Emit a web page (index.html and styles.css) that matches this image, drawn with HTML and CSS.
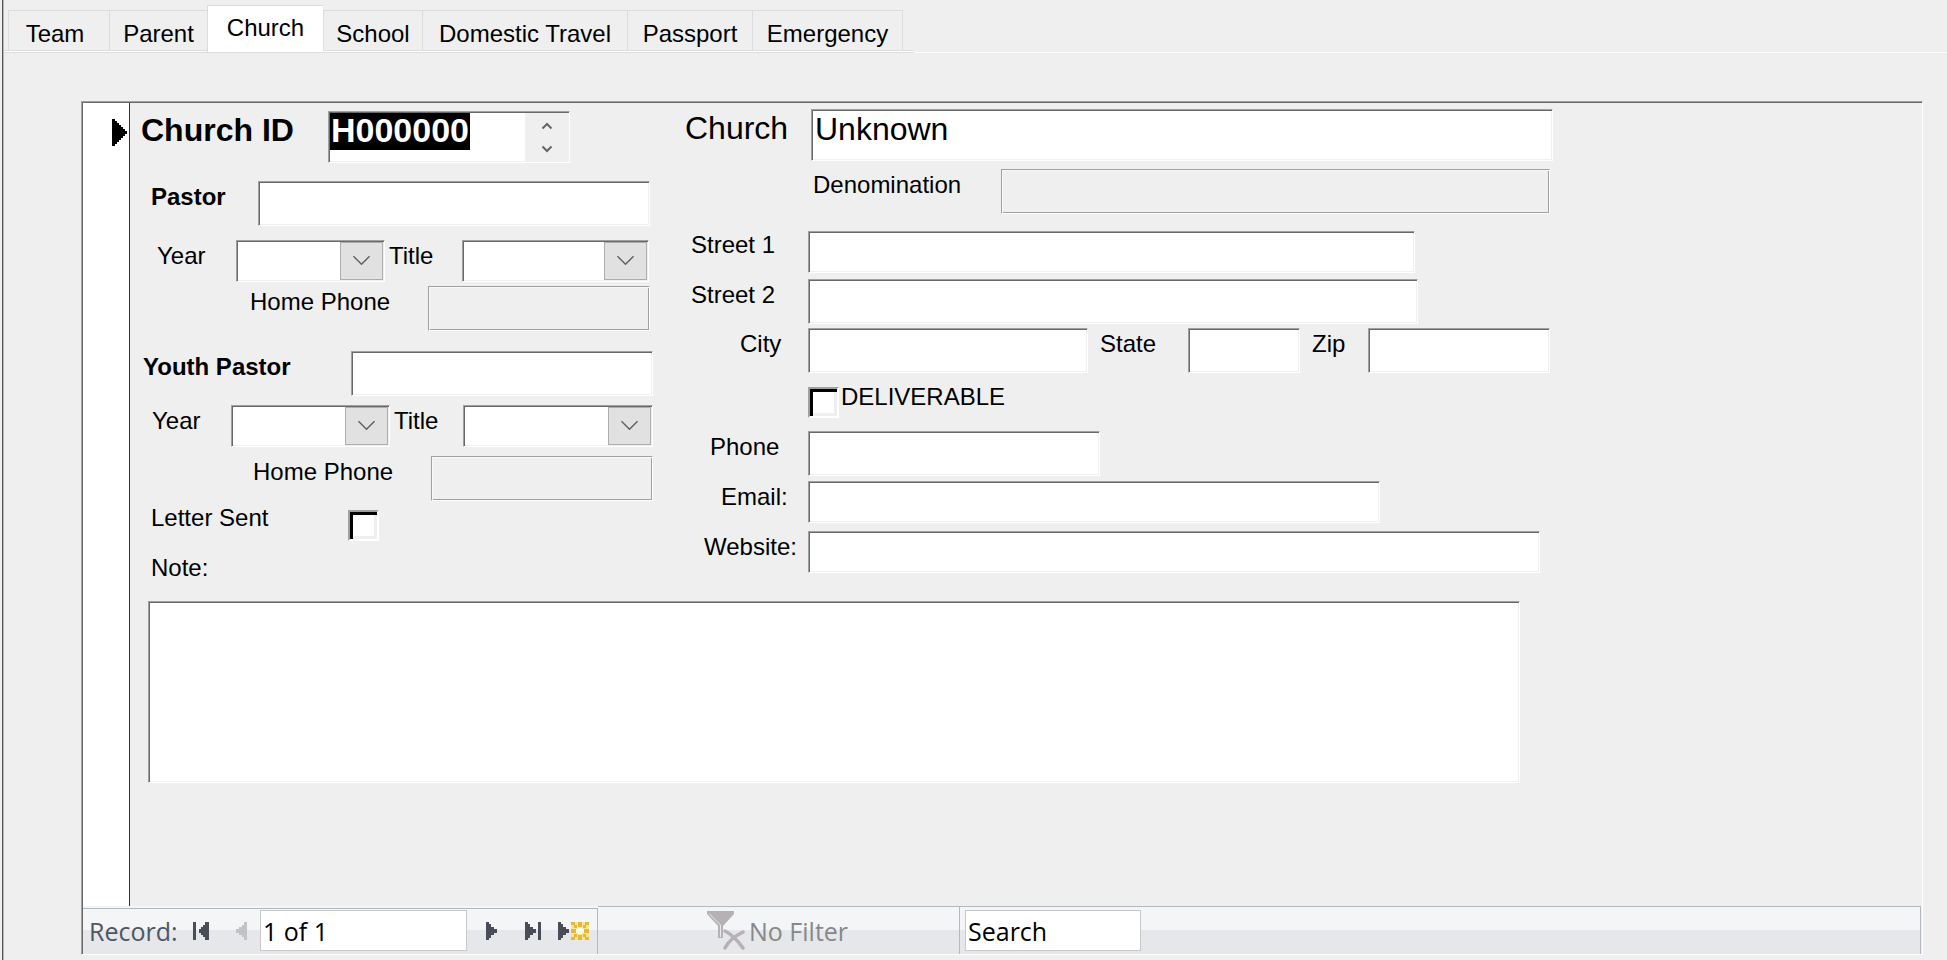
FILE: index.html
```html
<!DOCTYPE html>
<html lang="en">
<head>
<meta charset="utf-8">
<title>Church</title>
<link rel="stylesheet" href="styles.css">
</head>
<body>
<main class="window">
  <div class="tab-strip">
    <nav class="tabs" role="tablist">
      <button class="tab tab-first" role="tab">Team</button>
      <button class="tab" role="tab">Parent</button>
      <button class="tab tab-active" role="tab" aria-selected="true">Church</button>
      <button class="tab" role="tab">School</button>
      <button class="tab" role="tab">Domestic Travel</button>
      <button class="tab" role="tab">Passport</button>
      <button class="tab" role="tab">Emergency</button>
    </nav>
  </div>

  <section class="subform">
    <div class="record">
      <div class="selector">
        <svg class="marker" width="15" height="27" viewBox="0 0 15 27"><path d="M0 0h3v2h2v2h2v2h2v2h2v2h2v2h2v3h-2v2h-2v2H9v2H7v2H5v2H3v2H0z"/></svg>
      </div>
      <form class="detail">
        <div class="columns">
          <div class="people">
            <div class="row row-id">
              <label class="label label-large label-strong" for="church-id">Church ID</label>
              <div class="field spinner">
                <input class="id-value" id="church-id" value="H000000">
                <div class="spin-buttons">
                  <button class="spin" type="button" aria-label="Previous"><svg width="12" height="9" viewBox="0 0 12 9"><path d="M1.500 7.500 6 3l4.500 4.500"/></svg></button>
                  <button class="spin" type="button" aria-label="Next"><svg width="12" height="9" viewBox="0 0 12 9"><path d="M1.500 1.500 6 6l4.500-4.500"/></svg></button>
                </div>
              </div>
            </div>
            <div class="row row-pastor">
              <label class="label label-strong" for="pastor">Pastor</label>
              <input class="field" id="pastor">
            </div>
            <div class="row row-terms">
              <label class="label" for="pastor-year">Year</label>
              <div class="combo"><select class="field" id="pastor-year"><option></option></select><svg class="arrow" viewBox="0 0 43 38"><path d="M13 14l8.500 8.500L30 14"/></svg></div>
              <label class="label" for="pastor-title">Title</label>
              <div class="combo"><select class="field" id="pastor-title"><option></option></select><svg class="arrow" viewBox="0 0 43 38"><path d="M13 14l8.500 8.500L30 14"/></svg></div>
            </div>
            <div class="row row-phone">
              <label class="label" for="pastor-phone">Home Phone</label>
              <input class="field etched" id="pastor-phone">
            </div>
            <div class="row row-youth">
              <label class="label label-strong" for="youth">Youth Pastor</label>
              <input class="field" id="youth">
            </div>
            <div class="row row-terms row-terms-youth">
              <label class="label" for="youth-year">Year</label>
              <div class="combo"><select class="field" id="youth-year"><option></option></select><svg class="arrow" viewBox="0 0 43 38"><path d="M13 14l8.500 8.500L30 14"/></svg></div>
              <label class="label" for="youth-title">Title</label>
              <div class="combo"><select class="field" id="youth-title"><option></option></select><svg class="arrow" viewBox="0 0 43 38"><path d="M13 14l8.500 8.500L30 14"/></svg></div>
            </div>
            <div class="row row-phone row-phone-youth">
              <label class="label" for="youth-phone">Home Phone</label>
              <input class="field etched" id="youth-phone">
            </div>
            <div class="row row-letter">
              <label class="label" for="letter">Letter Sent</label>
              <input class="check" type="checkbox" id="letter">
            </div>
            <div class="row row-note">
              <label class="label" for="note">Note:</label>
            </div>
          </div>

          <div class="place">
            <div class="row row-church">
              <label class="label label-large" for="church">Church</label>
              <input class="field field-large" id="church" value="Unknown">
            </div>
            <div class="row row-denomination">
              <label class="label" for="denomination">Denomination</label>
              <input class="field etched" id="denomination">
            </div>
            <div class="row row-address row-street">
              <label class="label" for="street1">Street 1</label>
              <input class="field field-short" id="street1">
            </div>
            <div class="row row-address">
              <label class="label" for="street2">Street 2</label>
              <input class="field" id="street2">
            </div>
            <div class="row row-city">
              <label class="label" for="city">City</label>
              <input class="field" id="city">
              <label class="label" for="state">State</label>
              <input class="field" id="state">
              <label class="label" for="zip">Zip</label>
              <input class="field" id="zip">
            </div>
            <div class="row row-deliverable">
              <input class="check" type="checkbox" id="deliverable">
              <label class="label" for="deliverable">DELIVERABLE</label>
            </div>
            <div class="row row-tel">
              <label class="label" for="phone">Phone</label>
              <input class="field" id="phone">
            </div>
            <div class="row row-email">
              <label class="label" for="email">Email:</label>
              <input class="field field-short" id="email">
            </div>
            <div class="row row-website">
              <label class="label" for="website">Website:</label>
              <input class="field field-short" id="website">
            </div>
          </div>
        </div>
        <textarea class="field note" id="note"></textarea>
      </form>
    </div>

    <footer class="nav">
      <div class="nav-part nav-records">
        <label class="nav-label" for="position">Record:</label>
        <button class="nav-button nav-first" aria-label="First record"><svg width="16" height="18" viewBox="0 0 16 18"><path d="M0 0h3v18H0zM16 0v18h-4v-3h-2v-2H8v-2H6V7h2V5h2V3h2V0z"/></svg></button>
        <button class="nav-button nav-prev" disabled aria-label="Previous record"><svg width="11" height="18" viewBox="0 0 11 18"><path d="M11 0v18H8v-3H6v-2H3v-2H0V7h3V5h3V3h2V0z"/></svg></button>
        <input class="nav-input nav-position" id="position" value="1 of 1">
        <button class="nav-button nav-next" aria-label="Next record"><svg width="11" height="18" viewBox="0 0 11 18"><path d="M0 0h3v2h2v3h3v2h3v4H8v2H5v3H3v2H0z"/></svg></button>
        <button class="nav-button nav-last" aria-label="Last record"><svg width="16" height="18" viewBox="0 0 16 18"><path d="M0 0h3v2h2v3h3v2h3v4H8v2H5v3H3v2H0zM13 0h3v18h-3z"/></svg></button>
        <button class="nav-button nav-new" aria-label="New record">
          <svg width="31" height="18" viewBox="0 0 31 18">
            <path d="M0 0h3v2h2v3h3v2h3v4H8v2H5v3H3v2H0z"/>
            <path fill="#f7e596" d="M13 0h18v18H13z"/>
            <path fill="#e3b93a" d="M13 0h4v3h-4zM20 0h4v5h-4zM27 0h4v3h-4zM13 7h5v4h-5zM26 7h5v4h-5zM13 15h4v3h-4zM20 13h4v5h-4zM27 15h4v3h-4zM16 3h3v3h-3zM25 3h3v3h-3zM16 12h3v3h-3zM25 12h3v3h-3z"/>
            <path fill="#fffce8" d="M20 6h4v1h2v4h-2v1h-4v-1h-2V7h2z"/>
          </svg>
        </button>
      </div>
      <div class="nav-part nav-filter">
        <svg width="38" height="39" viewBox="0 0 38 39"><path fill="#b5b1b4" d="M0 0h27v3L16 15v12h-5V15L0 3z"/><path fill="none" stroke="#e9e8ea" d="M2 2.500 13.500 14v12"/><path fill="none" stroke="#b5b1b4" stroke-width="3.500" d="M18 20c6 3 13 10 18 17M36 21c-8 4-15 10-18 16" stroke-linecap="round"/></svg>
        <span>No Filter</span>
      </div>
      <div class="nav-part nav-search">
        <input class="nav-input" value="Search" aria-label="Search">
      </div>
    </footer>
  </section>
</main>
</body>
</html>
```
FILE: styles.css
```css
* {
  box-sizing: border-box;
}

body {
  margin: 0;
  background: #efefef;
  color: #000;
  font: 24px/28px "Liberation Sans", Arial, sans-serif;
}

input,
select,
textarea,
button {
  margin: 0;
  padding: 0;
  border-radius: 0;
  font: inherit;
  color: inherit;
  outline: none;
}

button {
  border: 0;
  background: none;
}

.window {
  display: flex;
  flex-direction: column;
  min-height: 100vh;
  margin-left: 2px;
  border-left: 1px solid #555;
  box-shadow: inset 1px 0 #b8b8b8;
}

/* Tabs */
.tab-strip {
  display: flex;
  height: 53px;
  padding: 5px 0 0 1px;
}

.tab-strip::after {
  content: "";
  flex: 1;
  align-self: flex-end;
  height: 1px;
  margin-left: 2px;
  background: #fff;
}

.tabs {
  display: grid;
  grid-template-columns: 101px 98px 116px 99px 205px 125px 151px;
  align-items: end;
  width: 909px;
  padding-left: 4px;
  border-bottom: 1px solid #dcdcdc;
  box-shadow: inset 0 -1px #fff, inset 0 -2px #dcdcdc;
}

.tab {
  height: 41px;
  margin-bottom: 1px;
  padding-top: 6px;
  border: solid #dcdcdc;
  border-width: 1px 0 1px 1px;
}

.tab-first {
  padding-right: 8px;
}

.tab:last-child {
  border-right-width: 1px;
}

.tab-active {
  height: 47px;
  margin-bottom: 0;
  padding: 0 0 2px;
  border-bottom: 0;
  background: #fff;
}

/* Subform */
.subform {
  flex: 1;
  display: flex;
  flex-direction: column;
  margin: 48px 24px 5px 78px;
  border: 1px solid;
  border-color: #a0a0a0 #fff #fff #a0a0a0;
  box-shadow: inset 1px 1px #696969;
  padding: 1px 0 0 1px;
}

.record {
  flex: 1;
  display: flex;
}

.selector {
  width: 47px;
  padding: 16px 0 0 29px;
  border-right: 1px solid #333;
  background: #fff;
}

.marker {
  display: block;
}

.detail {
  flex: 1;
  padding: 6px 0 0 11px;
}

.columns {
  display: flex;
}

.people {
  display: grid;
  grid-template-rows: 70px 59px 46px 65px 54px 51px 46px 50px 49px;
  width: 534px;
  padding-top: 2px;
}

.place {
  display: grid;
  grid-template-rows: 60px 62px 48px 49px 55px 48px 50px 50px 42px;
}

.row {
  display: grid;
  align-items: start;
}

.row-id { grid-template-columns: 187px 242px; }
.row-pastor { grid-template-columns: 107px 392px; padding-left: 10px; }
.row-terms { grid-template-columns: 79px 149px 77px 187px; padding-left: 16px; }
.row-phone { grid-template-columns: 178px 222px; padding-left: 109px; }
.row-youth { grid-template-columns: 208px 302px; padding-left: 2px; }
.row-terms-youth { grid-template-columns: 79px 159px 73px 190px; padding-left: 11px; }
.row-phone-youth { padding-left: 112px; }
.row-letter { grid-template-columns: 197px 31px; padding-left: 10px; }
.row-note { padding-left: 10px; }

.row-church { grid-template-columns: 126px 742px; padding-left: 10px; }
.row-denomination { grid-template-columns: 188px 549px; padding-left: 138px; }
.row-address { grid-template-columns: 117px 610px; padding-left: 16px; }
.row-street { grid-template-columns: 117px 607px; }
.row-city { grid-template-columns: 68px 280px 100px 112px 68px 182px; padding-left: 65px; }
.row-deliverable { grid-template-columns: 32px auto; padding-left: 133px; }
.row-tel { grid-template-columns: 98px 292px; padding-left: 35px; }
.row-email { grid-template-columns: 87px 572px; padding-left: 46px; }
.row-website { grid-template-columns: 104px 732px; padding-left: 29px; }

.row-city .label:nth-of-type(n + 2) {
  padding-left: 12px;
}

.row-terms .label:nth-of-type(2) {
  padding-left: 4px;
}

.label {
  padding-top: 2px;
  white-space: nowrap;
}

.row-street .label {
  padding-top: 0;
}

.label-large {
  padding-top: 1px;
  font-size: 32px;
  line-height: 36px;
}

.label-strong {
  font-weight: bold;
}

.field {
  display: block;
  width: 100%;
  height: 45px;
  border: 1px solid;
  border-color: #a0a0a0 #fff #fff #a0a0a0;
  background: #fff;
  box-shadow: inset 1px 1px #696969, inset -1px -1px #efefef;
}

.field-short {
  height: 42px;
}

.field-large {
  height: 52px;
  padding: 0 3px 12px;
  font-size: 32px;
  line-height: 36px;
}

.etched {
  background: #efefef;
  box-shadow: inset 1px 1px #f8f8f8, inset -1px -1px #a0a0a0;
}

.spinner {
  display: flex;
  justify-content: space-between;
  height: 52px;
  padding: 1px;
}

.id-value {
  width: 140px;
  height: 37px;
  padding: 0 0 2px 1px;
  border: 0;
  background: #000;
  color: #fff;
  font-size: 34px;
  font-weight: bold;
  line-height: 35px;
}

.spin-buttons {
  display: grid;
  grid-template-rows: 1fr 1fr;
  width: 43px;
  background: #efefef;
}

.spin svg {
  display: block;
  margin: auto;
}

.spin path {
  fill: none;
  stroke: #666;
  stroke-width: 2;
}

.combo {
  position: relative;
}

.combo .field {
  height: 42px;
  appearance: none;
}

.arrow {
  position: absolute;
  top: 2px;
  right: 2px;
  width: 43px;
  height: 38px;
  border: 1px solid #adadad;
  background: #e1e1e1;
  pointer-events: none;
}

.arrow path {
  fill: none;
  stroke: #606060;
  stroke-width: 1.5;
}

.check {
  width: 31px;
  height: 31px;
  border: 2px solid;
  border-color: #a0a0a0 #fff #fff #a0a0a0;
  background: #fff;
  box-shadow: inset 3px 3px #000, inset -3px -3px #efefef;
  appearance: none;
}

.row-letter .check {
  margin-top: 8px;
}

.row-deliverable .check {
  margin-top: 4px;
}

.row-deliverable .label {
  padding: 0 0 0 1px;
}

.note {
  width: 1372px;
  height: 182px;
  margin-left: 7px;
  resize: none;
}

/* Record navigation */
.nav {
  display: flex;
  height: 48px;
  margin-right: 1px;
  border-right: 1px solid #b4b8c2;
  background: linear-gradient(#f3f5f7 24px, #e5e7eb 24px);
  font-family: "Open Sans", "Segoe UI", sans-serif;
  font-size: 25px;
}

.nav-part {
  display: flex;
  align-items: center;
  border-top: 1px solid #b4b8c2;
}

.nav-records {
  width: 515px;
  margin-top: 2px;
  padding: 0 0 2px 6px;
  border-right: 1px solid #b4b8c2;
  color: #4d5663;
}

.nav-label {
  width: 104px;
}

.nav-button {
  display: flex;
  justify-content: flex-start;
  fill: #4a4d57;
}

.nav-button:disabled {
  fill: #c1c3c7;
}

.nav-first { width: 43px; }
.nav-prev { width: 24px; }
.nav-next { width: 39px; margin-left: 19px; }
.nav-last { width: 33px; }

.nav-input {
  height: 41px;
  padding: 0 2px;
  border: 1px solid #c8c8c8;
  background: #fff;
  color: #000;
}

.nav-position {
  width: 207px;
}

.nav-filter {
  gap: 4px;
  width: 362px;
  padding-left: 109px;
  border-right: 1px solid #b4b8c2;
  color: #888;
}

.nav-search {
  flex: 1;
  padding-left: 5px;
}

.nav-search .nav-input {
  width: 176px;
}
```
